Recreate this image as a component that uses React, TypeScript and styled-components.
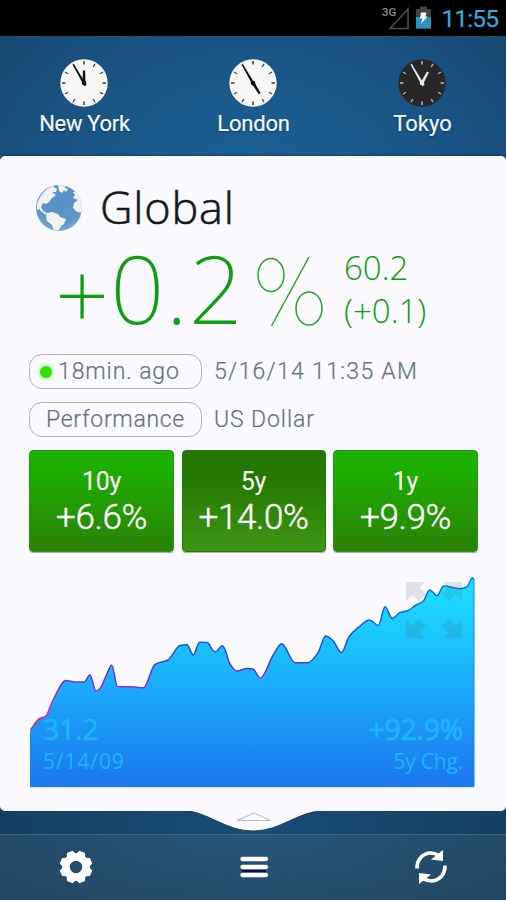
import React from "react";
import styled, { createGlobalStyle, css } from "styled-components";

const GlobalStyle = createGlobalStyle`
  * { box-sizing: border-box; }
  body { margin: 0; background: #143a5c; font-family: "Open Sans", "Noto Sans", sans-serif; }
`;

const Screen = styled.div`
  width: 506px;
  height: 900px;
  display: flex;
  flex-direction: column;
  overflow: hidden;
  background: radial-gradient(ellipse 420px 330px at 253px 200px, #1c6498 0%, #1a5384 50%, #164264 100%);
`;

const StatusBar = styled.header`
  height: 36px;
  flex: none;
  background: #000;
  display: flex;
  justify-content: flex-end;
  align-items: center;
  padding-right: 8px;
`;

const StatusTime = styled.span`
  font: 400 24.5px/36px Roboto, sans-serif;
  letter-spacing: -0.9px;
  color: #35a9dc;
  margin-left: 8px;
  padding-top: 2px;
  -webkit-text-stroke: 0.2px #35a9dc;
`;

const Clocks = styled.section`
  height: 120px;
  flex: none;
  display: grid;
  grid-template-columns: 168px 170px 168px;
`;

const City = styled.div`
  display: flex;
  flex-direction: column;
  align-items: center;
  padding-top: 22px;
`;

const CityName = styled.span<{ $spacing: number }>`
  font: 400 22px/30px Roboto, sans-serif;
  letter-spacing: ${(p) => p.$spacing}px;
  color: #f2f7fb;
  margin: 1px 0 0 1px;
  -webkit-text-stroke: 0.2px #f2f7fb;
  text-shadow: 0 1px 2px rgba(0, 20, 50, 0.5);
`;

const Card = styled.main`
  height: 655px;
  flex: none;
  background: #f9f9fe;
  border-radius: 5px;
  padding: 0 28px 0 29px;
  display: flex;
  flex-direction: column;
  box-shadow: 0 0 3px #092d4d;
`;

const TitleRow = styled.div`
  height: 94px;
  display: flex;
  align-items: center;
  padding: 9px 0 0 5px;
`;

const Title = styled.h1`
  margin: -2px 0 0 16px;
  font-weight: 300;
  font-size: 45px;
  line-height: 60px;
  letter-spacing: 0.8px;
  color: #14191c;
  -webkit-text-stroke: 0.6px #14191c;
`;

const QuoteRow = styled.div`
  height: 104px;
  flex: none;
  display: flex;
  color: #0d9e12;
  padding-left: 26px;
`;

const Change = styled.span`
  width: 202px;
  font-family: "Noto Sans", "Open Sans", sans-serif;
  font-weight: 200;
  font-size: 95px;
  line-height: 75px;
  letter-spacing: 1.2px;
  white-space: nowrap;
`;

const Sign = styled.span`
  line-height: 0;
  vertical-align: -6px;
`;

const Figures = styled.div`
  margin: -4px 0 0 19px;
  display: flex;
  flex-direction: column;
  font-weight: 300;
  font-size: 33px;
  line-height: 43px;
`;

const InfoRow = styled.div<{ $height: number }>`
  height: ${(p) => p.$height}px;
  flex: none;
  display: flex;
  align-items: flex-start;
  font-size: 23px;
  line-height: 36px;
  color: #65757b;
`;

const Pill = styled.div<{ $live?: boolean }>`
  width: 173px;
  height: 35px;
  flex: none;
  border: 1px solid #aeb1b5;
  border-radius: 13px;
  display: flex;
  align-items: center;
  justify-content: ${(p) => (p.$live ? "flex-start" : "center")};
  padding-left: ${(p) => (p.$live ? 10 : 0)}px;
  margin-right: 12px;
`;

const LiveDot = styled.i`
  width: 12px;
  height: 12px;
  border-radius: 50%;
  background: #35de0b;
  box-shadow: 0 0 4px #65ee45;
  margin-right: 6px;
`;

const Copy = styled.span<{ $spacing?: number }>`
  font-family: Roboto, sans-serif;
  font-weight: 300;
  letter-spacing: ${(p) => p.$spacing ?? 0}px;
  white-space: nowrap;
  -webkit-text-stroke: 0.2px currentColor;
`;

const Periods = styled.div`
  display: grid;
  grid-template-columns: 145px 144px 145px;
  column-gap: 7.5px;
  height: 102px;
  flex: none;
`;

const Period = styled.button<{ $active?: boolean }>`
  border: 1px solid ${(p) => (p.$active ? "#23760c" : "#289512")};
  border-radius: 4px;
  padding: 0;
  display: flex;
  flex-direction: column;
  align-items: center;
  justify-content: center;
  color: #fff;
  font-family: Roboto, sans-serif;
  box-shadow: 0 1px 1px #aaa;
  ${(p) =>
    p.$active
      ? css`background: linear-gradient(#247700 25%, #3e9618);`
      : css`background: linear-gradient(#1cb000 15%, #2d8209);`}
`;

const PeriodName = styled.span`
  font-size: 25px;
  line-height: 33px;
  letter-spacing: -0.3px;
`;

const PeriodValue = styled.span`
  font-size: 35px;
  line-height: 40px;
  letter-spacing: -0.4px;
  font-weight: 300;
  -webkit-text-stroke: 0.4px #fff;
`;

const ChartBox = styled.div`
  position: relative;
  height: 224px;
  flex: none;
  margin: 14px -28px 0 -29px;
`;

const ChartSvg = styled.svg`
  display: block;
`;

const ChartLegend = styled.div`
  position: absolute;
  left: 43px;
  right: 43px;
  top: 145px;
  display: flex;
  justify-content: space-between;
  color: #1eb5ff;
`;

const LegendColumn = styled.div<{ $end?: boolean }>`
  display: flex;
  flex-direction: column;
  align-items: ${(p) => (p.$end ? "flex-end" : "flex-start")};
`;

const LegendValue = styled.span<{ $spacing: number }>`
  font-weight: 400;
  font-size: 28.5px;
  line-height: 36px;
  letter-spacing: ${(p) => p.$spacing}px;
  -webkit-text-stroke: 0.6px #1eb5ff;
`;

const LegendNote = styled.span<{ $spacing: number }>`
  font: 400 21px/29px "Open Sans", sans-serif;
  letter-spacing: ${(p) => p.$spacing}px;
`;

const Expand = styled.svg`
  position: absolute;
  left: 406px;
  top: 16px;
`;

const DrawerEdge = styled.div`
  height: 23px;
  flex: none;
  display: flex;
  justify-content: center;
  background: linear-gradient(90deg, #153f62, #184d78 50%, #153f62);
`;

const DrawerHandle = styled.svg`
  display: block;
  position: relative;
`;

const Toolbar = styled.nav`
  height: 66px;
  flex: none;
  border-top: 1px solid #3b6684;
  background: radial-gradient(ellipse 300px 90px at 50% 0, #27557a, #234863);
  display: grid;
  grid-template-columns: 152px 1fr 150px;
  padding-bottom: 2px;
`;

const ToolButton = styled.button`
  border: 0;
  padding: 0;
  background: none;
  display: flex;
  align-items: center;
  justify-content: center;
`;

const Signal = () => (
  <svg width="51" height="36" viewBox="0 0 51 36">
    <text x="0" y="16" fontFamily="Roboto" fontSize="11.5" fontWeight="500" fill="#8b8b8b">3G</text>
    <path d="M8 28.500 L26 9 V28.500 Z" fill="none" stroke="#4c4c4c" strokeWidth="1.6" />
    <path d="M34 9 h4 v-2.500 h7 v2.500 h4 v19.500 h-15 z" fill="#424242" />
    <path d="M34 17 h15 v11.500 h-15 z" fill="#2c94ba" />
    <path d="M39 12.500 h5.500 l-1 4 h2 l-6.500 7.500 l1.500 -5.500 h-2.500 z" fill="#f4f8fa" />
  </svg>
);

function Clock({ hour, minute, dark }: { hour: number; minute: number; dark?: boolean }) {
  const ink = dark ? "#e8e8e8" : "#111";
  return (
    <svg width="50" height="50" viewBox="-25 -25 50 50">
      <circle r="23.700" fill={dark ? "#272727" : "#f6f6f6"} />
      {Array.from({ length: 12 }, (_, i) => (
        <line key={i} y1="-22" y2="-18.500" stroke={ink} strokeWidth="1.4" opacity={i % 3 ? 0.75 : 0.85} transform={`rotate(${i * 30})`} />
      ))}
      <path d="M-1.500 1 L-1.100 -12.500 H1.100 L1.500 1Z" fill={ink} transform={`rotate(${hour * 30})`} />
      <path d="M-1.400 3 L-.7 -21 H.7 L1.400 3Z" fill={ink} transform={`rotate(${minute * 6})`} />
      <circle r="2.300" fill={ink} />
    </svg>
  );
}

const Globe = () => (
  <svg width="50" height="50" viewBox="0 0 50 50">
    <defs>
      <radialGradient id="sea" cx=".5" cy=".4" r=".6">
        <stop offset="0" stopColor="#5590c6" />
        <stop offset=".8" stopColor="#6096c8" />
        <stop offset="1" stopColor="#7facd4" />
      </radialGradient>
      <clipPath id="disc"><circle cx="25" cy="25" r="23" /></clipPath>
    </defs>
    <circle cx="25" cy="25" r="23" fill="url(#sea)" />
    <g clipPath="url(#disc)" fill="#f1f1ef">
      <path d="M3 21 C6 12 12 5 19 3 L23 6 L22 9 L18 9 L22 12 L18 15 L15 19 L12 21 L9 20 L7 24 L9 28 L13 30 L12 32 L8 29 L5 26 L3 27Z" />
      <path d="M13 30 L18 29 L24 31 L26 34 L32 36 L30 41 L27 43 L25 47 L20 48 L18 42 L13 38 L12 34Z" />
      <path d="M24 2 L31 1 L31 5 L34 6 L32 9 L30 7 L28 10 L25 8Z" />
      <path d="M39 9 L43 9 L46 14 L49 22 L49 30 L43 29 L39 25 L40 20 L44 17 L39 15 L41 12Z" />
    </g>
  </svg>
);

const Percent = () => (
  <svg width="68" height="94" viewBox="0 0 68 94" fill="none" stroke="#24a428" strokeWidth="1.5">
    <ellipse cx="14" cy="25" rx="13" ry="16.500" />
    <ellipse cx="52" cy="58.500" rx="13" ry="16.500" />
    <path d="M52 7 L14.500 76" />
  </svg>
);

const SERIES: [number, number][] = [
  [30.5, 730], [39, 719], [45.5, 716.5], [53, 700], [66, 680.5], [75, 682], [84, 682], [90, 675], [96, 691], [100, 688.5],
  [106, 676], [111.7, 665.3], [117.5, 686.5], [135, 687], [143.5, 687.8], [155, 664.5], [168, 660], [180, 645.5], [187, 644.7],
  [193.3, 655], [199.5, 642.2], [207, 642.5], [215, 652], [222.7, 645.7], [230, 664], [237, 671], [247, 668.5], [253, 669],
  [260.3, 678.3], [273, 655.5], [281.7, 643.8], [295, 662.7], [308, 662.7], [318, 652.7], [325.7, 636], [333, 640.7],
  [341.5, 652.7], [349, 636.7], [358, 627.7], [369.7, 620], [378.3, 625.5], [385, 606.7], [392.3, 618.5], [400, 612.5],
  [408, 610.7], [416, 605], [423, 601.5], [429.7, 590], [437, 595.7], [443.7, 586], [459.7, 588.7], [467, 586.7], [472.5, 577.8], [474, 580],
];

function smoothPath(points: [number, number][]) {
  const slope = (i: number) => (points[i + 1][1] - points[i][1]) / (points[i + 1][0] - points[i][0]);
  const tangent = points.map((_, i) => {
    if (i === 0) return slope(0);
    if (i === points.length - 1) return slope(i - 1);
    const a = slope(i - 1);
    const b = slope(i);
    return a * b <= 0 ? 0 : (2 * a * b) / (a + b);
  });
  return points
    .map(([x, y], i) => {
      if (i === 0) return `M${x} ${y}`;
      const [px, py] = points[i - 1];
      const d = (x - px) / 3;
      return `C${px + d} ${py + tangent[i - 1] * d} ${x - d} ${y - tangent[i] * d} ${x} ${y}`;
    })
    .join(" ");
}

function Chart() {
  const line = smoothPath(SERIES);
  return (
    <ChartSvg width="506" height="224" viewBox="0 566 506 224">
      <defs>
        <linearGradient id="area" gradientUnits="userSpaceOnUse" x1="0" y1="578" x2="0" y2="787">
          <stop offset="0" stopColor="#1ce3ff" />
          <stop offset=".5" stopColor="#1aaefb" />
          <stop offset="1" stopColor="#1b76ee" />
        </linearGradient>
        <linearGradient id="trend" gradientUnits="userSpaceOnUse" x1="0" y1="732" x2="0" y2="578">
          <stop offset="0" stopColor="#f01842" />
          <stop offset=".13" stopColor="#da28c8" />
          <stop offset=".4" stopColor="#5731df" />
          <stop offset=".55" stopColor="#194fe6" />
          <stop offset="1" stopColor="#0876e8" />
        </linearGradient>
      </defs>
      <path d={`${line} V786.700 H30.500 Z`} fill="url(#area)" />
      <path d="M30.500 731 V786.700 H474 V580" fill="none" stroke="#187ff5" strokeWidth="1" />
      <path d={line} fill="none" stroke="url(#trend)" strokeWidth="1.5" strokeLinejoin="round" />
    </ChartSvg>
  );
}

const Arrow = "M0 0 H19 L13.500 5.500 L20 12 L13 19 L6.500 12.500 L0 19Z";

export default function App() {
  return (
    <>
      <GlobalStyle />
      <Screen>
        <StatusBar>
          <Signal />
          <StatusTime>11:55</StatusTime>
        </StatusBar>
        <Clocks>
          <City><Clock hour={12} minute={55} /><CityName $spacing={-0.3}>New York</CityName></City>
          <City><Clock hour={4.92} minute={55} /><CityName $spacing={-0.2}>London</CityName></City>
          <City><Clock hour={0.95} minute={55} dark /><CityName $spacing={0}>Tokyo</CityName></City>
        </Clocks>
        <Card>
          <TitleRow><Globe /><Title>Global</Title></TitleRow>
          <QuoteRow>
            <Change><Sign>+</Sign>0.2</Change>
            <Percent />
            <Figures><span>60.2</span><span>(+0.1)</span></Figures>
          </QuoteRow>
          <InfoRow $height={48}>
            <Pill $live><LiveDot /><Copy $spacing={0.9}>18min. ago</Copy></Pill>
            <Copy $spacing={1.3}>5/16/14 11:35 AM</Copy>
          </InfoRow>
          <InfoRow $height={48}>
            <Pill><Copy $spacing={0.7}>Performance</Copy></Pill>
            <Copy $spacing={0.9}>US Dollar</Copy>
          </InfoRow>
          <Periods>
            <Period><PeriodName>10y</PeriodName><PeriodValue>+6.6%</PeriodValue></Period>
            <Period $active><PeriodName>5y</PeriodName><PeriodValue>+14.0%</PeriodValue></Period>
            <Period><PeriodName>1y</PeriodName><PeriodValue>+9.9%</PeriodValue></Period>
          </Periods>
          <ChartBox>
            <Chart />
            <Expand width="56" height="56" viewBox="0 0 56 56" fill="#505050" fillOpacity=".14">
              <path d={Arrow} />
              <path d={Arrow} transform="translate(56 0) scale(-1 1)" />
              <path d={Arrow} transform="translate(0 56) scale(1 -1)" />
              <path d={Arrow} transform="translate(56 56) scale(-1 -1)" />
            </Expand>
            <ChartLegend>
              <LegendColumn><LegendValue $spacing={-0.3}>31.2</LegendValue><LegendNote $spacing={0.9}>5/14/09</LegendNote></LegendColumn>
              <LegendColumn $end><LegendValue $spacing={-0.3}>+92.9%</LegendValue><LegendNote $spacing={-0.2}>5y Chg.</LegendNote></LegendColumn>
            </ChartLegend>
          </ChartBox>
        </Card>
        <DrawerEdge>
          <DrawerHandle width="150" height="23" viewBox="178 811 150 23">
            <path d="M185 810.500 H323 V811 C298 811 281 831 253 831 C225 831 207 811 185 811Z" fill="#f9f9fe" />
            <path d="M185 811 C207 811 225 831 253 831 C281 831 298 811 323 811" fill="none" stroke="#0c2b47" strokeWidth=".8" />
            <path d="M237 820.500 L254 813 L270.500 820.500Z" fill="none" stroke="#b9b9bb" strokeWidth="1" />
          </DrawerHandle>
        </DrawerEdge>
        <Toolbar>
          <ToolButton aria-label="Settings">
            <svg width="34" height="34" viewBox="-17 -17 34 34">
              <circle r="10" fill="none" stroke="#fff" strokeWidth="7.600" />
              {Array.from({ length: 8 }, (_, i) => (
                <path key={i} d="M-5 -12 L-3 -16.300 H3 L5 -12Z" fill="#fff" transform={`rotate(${22.5 + i * 45})`} />
              ))}
            </svg>
          </ToolButton>
          <ToolButton aria-label="Menu">
            <svg width="30" height="24" viewBox="0 0 30 24">
              <path d="M3 16 H27" stroke="#07105a" strokeWidth="2.500" />
              <path d="M3.500 4 H27 M3.500 12 H27 M3.500 20 H27" stroke="#fff" strokeWidth="4.300" strokeLinecap="round" />
            </svg>
          </ToolButton>
          <ToolButton aria-label="Refresh">
            <svg width="36" height="36" viewBox="-18 -18 36 36">
              {[0, 180].map((angle) => (
                <g key={angle} transform={`rotate(${angle})`}>
                  <path d="M-14 1.500 C-14 -8 -8 -14 0 -14 C3 -14 5 -13 8 -11.500" fill="none" stroke="#fff" strokeWidth="3.700" />
                  <path d="M12 -17 V-6 L0 -7.500Z" fill="#fff" />
                </g>
              ))}
            </svg>
          </ToolButton>
        </Toolbar>
      </Screen>
    </>
  );
}
